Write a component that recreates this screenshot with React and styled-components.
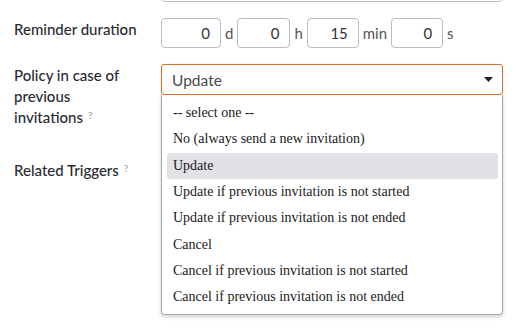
import React from "react";
import styled, { createGlobalStyle } from "styled-components";

const Global = createGlobalStyle`
  html, body { margin: 0; padding: 0; background: #fff; }
  body { font-family: Lato, "Noto Sans", sans-serif; color: #222; }
`;

const Page = styled.div`
  width: 524px;
  height: 335px;
  overflow: hidden;
  position: relative;
`;

const Form = styled.div`
  margin-top: -27px;
  display: flex;
  flex-direction: column;
`;

const Row = styled.div`
  display: grid;
  grid-template-columns: 161px 342px;
  align-items: start;
  margin-bottom: ${(p) => p.$gap ?? 16}px;
  position: relative;
`;

const Label = styled.div`
  padding-left: 14px;
  padding-right: 20px;
  padding-top: ${(p) => p.$pt ?? 0}px;
  font-size: 15px;
  line-height: 21px;
  font-weight: 500;
  color: #2a2a33;
`;

const Help = styled.span`
  display: inline-block;
  font-size: 10px;
  line-height: 10px;
  color: #999;
  margin-left: 5px;
  vertical-align: top;
  margin-top: 3px;
`;

const PlainBox = styled.div`
  height: 29px;
  border: 1px solid #b4bdc8;
  border-radius: 4px;
  box-sizing: border-box;
`;

const Duration = styled.div`
  display: flex;
  align-items: center;
`;

const NumInput = styled.div`
  box-sizing: border-box;
  width: ${(p) => p.$w}px;
  height: 30px;
  border: 1px solid #b4bdc8;
  border-radius: 4px;
  display: flex;
  align-items: center;
  justify-content: flex-end;
  padding-right: 10px;
  font-size: 15px;
  color: #333;
`;

const Unit = styled.span`
  font-size: 15px;
  color: #555;
  margin: 0 4px;
`;

const Select = styled.div`
  box-sizing: border-box;
  height: 31px;
  border: 1px solid #d9712a;
  border-radius: 3px;
  box-shadow: 0 0 1px rgba(217, 113, 42, 0.5);
  display: flex;
  align-items: center;
  justify-content: space-between;
  padding: 0 9px 0 10px;
  font-size: 15.5px;
  font-weight: 400;
  color: #4a4a4a;
`;

const Caret = styled.svg`
  width: 9px;
  height: 5px;
  display: block;
`;

const Dropdown = styled.ul`
  position: absolute;
  left: 161px;
  top: 31px;
  width: 342px;
  box-sizing: border-box;
  margin: 0;
  list-style: none;
  padding: 5px 4px 4px 5px;
  background: #fff;
  border: 1px solid #a8a8a8;
  border-top: none;
  border-radius: 0 0 4px 4px;
  box-shadow: 0 2px 4px rgba(0, 0, 0, 0.18);
  font-family: "Liberation Serif", "Times New Roman", serif;
  font-size: 14px;
  color: #1a1a1a;
  z-index: 2;
`;

const Option = styled.li`
  height: 26.3px;
  display: flex;
  align-items: center;
  padding-left: 6px;
  border-radius: 3px;
  background: ${(p) => (p.$active ? "#e2e1e6" : "transparent")};
`;

const options = [
  "-- select one --",
  "No (always send a new invitation)",
  "Update",
  "Update if previous invitation is not started",
  "Update if previous invitation is not ended",
  "Cancel",
  "Cancel if previous invitation is not started",
  "Cancel if previous invitation is not ended",
];

export default function App() {
  return (
    <Page>
      <Global />
      <Form>
        <Row $gap={16}>
          <Label />
          <PlainBox />
        </Row>
        <Row $gap={16}>
          <Label $pt={1}>Reminder duration</Label>
          <Duration>
            <NumInput $w={60}>0</NumInput>
            <Unit>d</Unit>
            <NumInput $w={53}>0</NumInput>
            <Unit>h</Unit>
            <NumInput $w={52}>15</NumInput>
            <Unit>min</Unit>
            <NumInput $w={52}>0</NumInput>
            <Unit>s</Unit>
          </Duration>
        </Row>
        <Row $gap={32}>
          <Label $pt={1}>
            Policy in case of previous invitations<Help>?</Help>
          </Label>
          <Select>
            <span>Update</span>
            <Caret viewBox="0 0 9 5">
              <path d="M0 0 H9 L4.5 5 Z" fill="#222" />
            </Caret>
          </Select>
          <Dropdown>
            {options.map((o) => (
              <Option key={o} $active={o === "Update"}>
                {o}
              </Option>
            ))}
          </Dropdown>
        </Row>
        <Row>
          <Label>
            Related Triggers<Help>?</Help>
          </Label>
          <PlainBox />
        </Row>
      </Form>
    </Page>
  );
}
